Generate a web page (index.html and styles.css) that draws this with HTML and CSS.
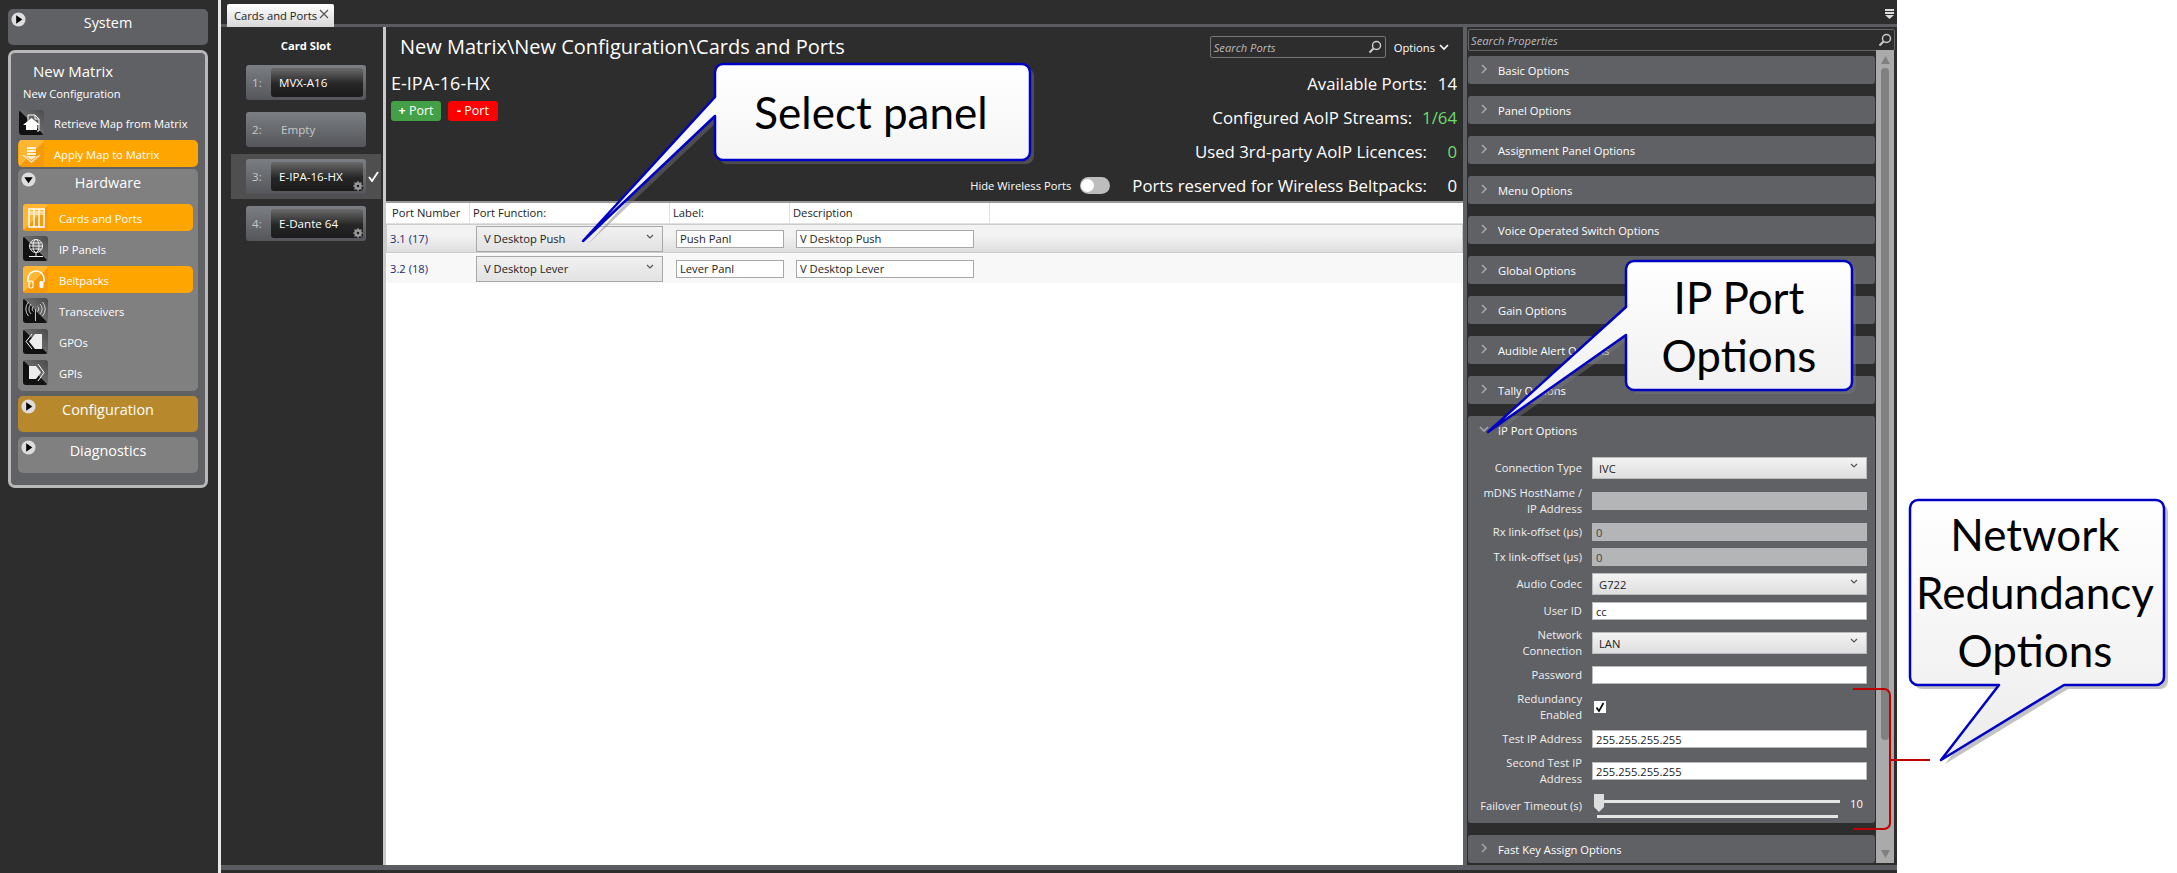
FILE: index.html
```html
<!DOCTYPE html>
<html lang="en">
<head>
<meta charset="utf-8">
<title>Cards and Ports</title>
<link rel="stylesheet" href="styles.css">
</head>
<body>
<div class="app">
  <aside class="sidebar">
    <section class="sys-panel">
      <svg class="disc" viewBox="0 0 16 16"><circle cx="8" cy="8" r="7.5" fill="#ddd"/><path d="M5.5 3.5 12 8l-6.500 4.500z" fill="#000"/></svg>
      <span class="group-title">System</span>
    </section>
    <section class="matrix">
      <div class="matrix-name">New Matrix</div>
      <div class="config-name">New Configuration</div>
      <div class="nav-row nav-top">
        <span class="tile"><svg viewBox="0 0 25 25"><path d="M9 11V5h7l4 4v12h-2M20 9h-4V5" fill="none" stroke="#fff"/><path d="M12.500 8 21 15h-3v5H7v-5H4z" fill="#fff"/></svg></span>
        <span>Retrieve Map from Matrix</span>
      </div>
      <div class="nav-row nav-apply on">
        <span class="tile"><svg viewBox="0 0 25 25"><path d="M8 6h9v2H8zM8 9h9v2H8zM8 12h9v2H8z" fill="#fff" opacity=".85"/><path d="M4 14l8.500 7 8.500-7" fill="none" stroke="#fff" opacity=".7" stroke-width="1.500"/><path d="M7 15h11l-5.500 4z" fill="#fff" opacity=".8"/></svg></span>
        <span>Apply Map to Matrix</span>
      </div>
      <div class="hardware">
        <div class="subhead">
          <svg class="disc" viewBox="0 0 16 16"><circle cx="8" cy="8" r="7.500" fill="#ddd"/><path d="M3.500 5.500h9L8 12z" fill="#000"/></svg>
          <span class="group-title">Hardware</span>
        </div>
        <div class="nav-row on">
          <span class="tile"><svg viewBox="0 0 25 25"><path d="M6 4h15v18H6zM11 4v18M16 4v18" fill="none" stroke="#fff" stroke-width="1.500"/><path d="M7 7h3M7 9h3M12 7h3M12 9h3M17 7h3M17 9h3" stroke="#fff"/></svg></span>
          <span>Cards and Ports</span>
        </div>
        <div class="nav-row">
          <span class="tile"><svg viewBox="0 0 25 25"><circle cx="13" cy="10" r="6.500" fill="none" stroke="#eee"/><ellipse cx="13" cy="10" rx="3" ry="6.500" fill="none" stroke="#eee"/><path d="M6.500 10h13M7.500 7h11M7.500 13h11M13 16.500V20M6 20.500h14" stroke="#eee" fill="none"/></svg></span>
          <span>IP Panels</span>
        </div>
        <div class="nav-row on">
          <span class="tile"><svg viewBox="0 0 25 25"><path d="M5 15v-3a8 8 0 0 1 16 0v3" fill="none" stroke="#fff" stroke-width="1.500"/><rect x="6" y="14" width="4" height="7" rx="1.500" fill="none" stroke="#fff" stroke-width="1.200"/><rect x="16.500" y="14" width="4" height="7" rx="1.500" fill="#fff"/></svg></span>
          <span>Beltpacks</span>
        </div>
        <div class="nav-row">
          <span class="tile"><svg viewBox="0 0 25 25"><path d="M12.500 11v12M10.500 8.500a3 3 0 0 0 0 5M14.500 8.500a3 3 0 0 1 0 5M8 6a7 7 0 0 0 0 10M17 6a7 7 0 0 1 0 10M5.500 4a10.500 10.500 0 0 0 0 14M19.500 4a10.500 10.500 0 0 1 0 14" fill="none" stroke="#ddd" stroke-width=".9"/></svg></span>
          <span>Transceivers</span>
        </div>
        <div class="nav-row">
          <span class="tile"><svg viewBox="0 0 25 25"><path d="M12 5h7v15h-7l-6-7.500z" fill="#eee"/><path d="M9 5 3 12.500 9 20" fill="none" stroke="#fff"/></svg></span>
          <span>GPOs</span>
        </div>
        <div class="nav-row">
          <span class="tile"><svg viewBox="0 0 25 25"><path d="M6 6h7l5 6.500-5 6.500H6z" fill="#eee"/><path d="M15 4l6 8.500-6 8.500" fill="none" stroke="#fff"/></svg></span>
          <span>GPIs</span>
        </div>
      </div>
      <div class="fold amber">
        <svg class="disc" viewBox="0 0 16 16"><circle cx="8" cy="8" r="7.500" fill="#ddd"/><path d="M5.500 3.500 12 8l-6.500 4.500z" fill="#000"/></svg>
        <span class="group-title">Configuration</span>
      </div>
      <div class="fold grey">
        <svg class="disc" viewBox="0 0 16 16"><circle cx="8" cy="8" r="7.500" fill="#ddd"/><path d="M5.500 3.500 12 8l-6.500 4.500z" fill="#000"/></svg>
        <span class="group-title">Diagnostics</span>
      </div>
    </section>
  </aside>

  <div class="workspace">
    <div class="tabbar">
      <div class="tab"><span>Cards and Ports</span><svg class="tab-x" viewBox="0 0 10 10"><path d="M1 1l8 8M9 1 1 9" stroke="#555" stroke-width="1.200"/></svg></div>
      <svg class="pin" viewBox="0 0 9 10"><path d="M0 0h9v2H0zM0 3h9v2H0z" fill="#ddd"/><path d="M0 6h9L4.500 10z" fill="#ddd"/></svg>
    </div>
    <div class="content">
      <div class="slots">
        <div class="slots-title">Card Slot</div>
        <div class="slot-wrap"><div class="slot"><span class="slot-num">1:</span><span class="slot-card">MVX-A16</span></div></div>
        <div class="slot-wrap"><div class="slot"><span class="slot-num">2:</span><span class="slot-empty">Empty</span></div></div>
        <div class="slot-wrap picked"><div class="slot"><span class="slot-num">3:</span><span class="slot-card">E-IPA-16-HX<svg class="gear" viewBox="0 0 10 10"><circle cx="5" cy="5" r="2.500" fill="none" stroke="#9a9a9a" stroke-width="2.400"/><path d="M5 0v2M5 8v2M0 5h2M8 5h2M1.500 1.500l1.500 1.500M7 7l1.500 1.500M1.500 8.500 3 7M7 3l1.500-1.500" stroke="#9a9a9a" stroke-width="1.200"/></svg></span></div><svg class="tick" viewBox="0 0 11 11"><path d="M1 6l3 4 6-9" fill="none" stroke="#fff" stroke-width="1.800"/></svg></div>
        <div class="slot-wrap"><div class="slot"><span class="slot-num">4:</span><span class="slot-card">E-Dante 64<svg class="gear" viewBox="0 0 10 10"><circle cx="5" cy="5" r="2.500" fill="none" stroke="#9a9a9a" stroke-width="2.400"/><path d="M5 0v2M5 8v2M0 5h2M8 5h2M1.500 1.500l1.500 1.500M7 7l1.500 1.500M1.500 8.500 3 7M7 3l1.500-1.500" stroke="#9a9a9a" stroke-width="1.200"/></svg></span></div></div>
      </div>

      <main class="main">
        <header class="main-head">
          <div class="head-top">
            <h1 class="crumb">New Matrix\New Configuration\Cards and Ports</h1>
            <div class="search-ports"><span>Search Ports</span><svg class="lens" viewBox="0 0 14 14"><circle cx="8.500" cy="5.500" r="4" fill="none" stroke="#ccc" stroke-width="1.500"/><path d="M5.500 8.500 1.500 12.500" stroke="#ccc" stroke-width="2"/></svg></div>
            <div class="options">Options<svg class="opt-chev" viewBox="0 0 10 7"><path d="M1 1l4 4 4-4" fill="none" stroke="#fff" stroke-width="1.600"/></svg></div>
          </div>
          <div class="head-body">
            <div class="card-info">
              <div class="card-name">E-IPA-16-HX</div>
              <div class="port-btns"><span class="port-btn add"><b>+</b> Port</span><span class="port-btn del"><b>-</b> Port</span></div>
            </div>
            <div class="stats">
              <div class="stat"><span>Available Ports:</span><span class="stat-val">14</span></div>
              <div class="stat"><span>Configured AoIP Streams:</span><span class="stat-val wide ok">1/64</span></div>
              <div class="stat"><span>Used 3rd-party AoIP Licences:</span><span class="stat-val ok">0</span></div>
              <div class="stat">
                <span class="hide-wl">Hide Wireless Ports</span>
                <span class="toggle"><i></i></span>
                <span>Ports reserved for Wireless Beltpacks:</span><span class="stat-val">0</span>
              </div>
            </div>
          </div>
        </header>
        <div class="ports">
          <div class="ports-head"><span>Port Number</span><span>Port Function:</span><span>Label:</span><span>Description</span></div>
          <div class="port-row sel">
            <span class="port-no">3.1 (17)</span>
            <div class="drop"><span>V Desktop Push</span><svg class="chev" viewBox="0 0 8 6"><path d="M1 1l3 3 3-3" fill="none" stroke="#555" stroke-width="1.200"/></svg></div>
            <div class="cell-in label-in">Push Panl</div>
            <div class="cell-in desc-in">V Desktop Push</div>
          </div>
          <div class="port-row">
            <span class="port-no">3.2 (18)</span>
            <div class="drop"><span>V Desktop Lever</span><svg class="chev" viewBox="0 0 8 6"><path d="M1 1l3 3 3-3" fill="none" stroke="#555" stroke-width="1.200"/></svg></div>
            <div class="cell-in label-in">Lever Panl</div>
            <div class="cell-in desc-in">V Desktop Lever</div>
          </div>
        </div>
      </main>

      <aside class="props">
        <div class="search-props"><span>Search Properties</span><svg class="lens" viewBox="0 0 14 14"><circle cx="8.500" cy="5.500" r="4" fill="none" stroke="#ccc" stroke-width="1.500"/><path d="M5.500 8.500 1.500 12.500" stroke="#ccc" stroke-width="2"/></svg></div>
        <div class="props-body">
          <div class="sections">
            <div class="sec"><svg class="sec-chev" viewBox="0 0 6 10"><path d="M1 1l4 4-4 4" fill="none" stroke="#aaa" stroke-width="1.500"/></svg>Basic Options</div>
            <div class="sec"><svg class="sec-chev" viewBox="0 0 6 10"><path d="M1 1l4 4-4 4" fill="none" stroke="#aaa" stroke-width="1.500"/></svg>Panel Options</div>
            <div class="sec"><svg class="sec-chev" viewBox="0 0 6 10"><path d="M1 1l4 4-4 4" fill="none" stroke="#aaa" stroke-width="1.500"/></svg>Assignment Panel Options</div>
            <div class="sec"><svg class="sec-chev" viewBox="0 0 6 10"><path d="M1 1l4 4-4 4" fill="none" stroke="#aaa" stroke-width="1.500"/></svg>Menu Options</div>
            <div class="sec"><svg class="sec-chev" viewBox="0 0 6 10"><path d="M1 1l4 4-4 4" fill="none" stroke="#aaa" stroke-width="1.500"/></svg>Voice Operated Switch Options</div>
            <div class="sec"><svg class="sec-chev" viewBox="0 0 6 10"><path d="M1 1l4 4-4 4" fill="none" stroke="#aaa" stroke-width="1.500"/></svg>Global Options</div>
            <div class="sec"><svg class="sec-chev" viewBox="0 0 6 10"><path d="M1 1l4 4-4 4" fill="none" stroke="#aaa" stroke-width="1.500"/></svg>Gain Options</div>
            <div class="sec"><svg class="sec-chev" viewBox="0 0 6 10"><path d="M1 1l4 4-4 4" fill="none" stroke="#aaa" stroke-width="1.500"/></svg>Audible Alert Options</div>
            <div class="sec"><svg class="sec-chev" viewBox="0 0 6 10"><path d="M1 1l4 4-4 4" fill="none" stroke="#aaa" stroke-width="1.500"/></svg>Tally Options</div>
            <div class="sec-open">
              <div class="sec"><svg class="sec-chev down" viewBox="0 0 6 10"><path d="M1 1l4 4-4 4" fill="none" stroke="#aaa" stroke-width="1.500"/></svg>IP Port Options</div>
              <div class="form">
                <label>Connection Type</label><div class="fld drop-fld"><span>IVC</span><svg class="chev" viewBox="0 0 8 6"><path d="M1 1l3 3 3-3" fill="none" stroke="#555" stroke-width="1.200"/></svg></div>
                <label>mDNS HostName /<br>IP Address</label><div class="fld off"></div>
                <label>Rx link-offset (µs)</label><div class="fld off">0</div>
                <label>Tx link-offset (µs)</label><div class="fld off">0</div>
                <label>Audio Codec</label><div class="fld drop-fld"><span>G722</span><svg class="chev" viewBox="0 0 8 6"><path d="M1 1l3 3 3-3" fill="none" stroke="#555" stroke-width="1.200"/></svg></div>
                <label>User ID</label><div class="fld">cc</div>
                <label>Network<br>Connection</label><div class="fld drop-fld"><span>LAN</span><svg class="chev" viewBox="0 0 8 6"><path d="M1 1l3 3 3-3" fill="none" stroke="#555" stroke-width="1.200"/></svg></div>
                <label>Password</label><div class="fld"></div>
                <label>Redundancy<br>Enabled</label><div class="check-cell"><svg class="check" viewBox="0 0 12 12"><rect width="12" height="12" fill="#fff"/><path d="M2.500 6.500 5 10l4.500-8" fill="none" stroke="#000" stroke-width="1.600"/></svg></div>
                <label>Test IP Address</label><div class="fld">255.255.255.255</div>
                <label>Second Test IP<br>Address</label><div class="fld">255.255.255.255</div>
                <label class="fail-label">Failover Timeout (s)</label>
                <div class="slider">
                  <div class="slider-top"><svg class="thumb" viewBox="0 0 10 18"><path d="M0 0h10v13l-5 5-5-5z" fill="#ddd"/></svg><span class="track"></span><span class="slider-val">10</span></div>
                  <span class="track2"></span>
                </div>
              </div>
            </div>
            <div class="sec"><svg class="sec-chev" viewBox="0 0 6 10"><path d="M1 1l4 4-4 4" fill="none" stroke="#aaa" stroke-width="1.500"/></svg>Fast Key Assign Options</div>
          </div>
          <div class="scroll">
            <svg class="arrow" viewBox="0 0 9 8"><path d="M4.500 0 9 8H0z" fill="#808080"/></svg>
            <span class="scroll-thumb"></span>
            <svg class="arrow" viewBox="0 0 9 8"><path d="M0 0h9L4.500 8z" fill="#808080"/></svg>
          </div>
        </div>
      </aside>
    </div>
    <div class="footbar"></div>
  </div>
</div>

<svg class="notes" viewBox="0 0 2177 873" width="2177" height="873">
  <defs>
    <linearGradient id="bub" x1="0" y1="0" x2="0" y2="1"><stop offset="0" stop-color="#fff"/><stop offset="1" stop-color="#ececec"/></linearGradient>
  </defs>
  <path class="bub-shadow" d="M723 64H1022a8 8 0 0 1 8 8V152a8 8 0 0 1-8 8H723a8 8 0 0 1-8-8V116L583 241 715 97V72a8 8 0 0 1 8-8z" transform="translate(4 4)"/>
  <path class="bub" d="M723 64H1022a8 8 0 0 1 8 8V152a8 8 0 0 1-8 8H723a8 8 0 0 1-8-8V116L583 241 715 97V72a8 8 0 0 1 8-8z"/>
  <text class="bub-text" x="871" y="129">Select panel</text>

  <path class="bub-shadow" d="M1634 261H1844a8 8 0 0 1 8 8V382a8 8 0 0 1-8 8H1634a8 8 0 0 1-8-8V335L1488 432 1626 307V269a8 8 0 0 1 8-8z" transform="translate(4 4)"/>
  <path class="bub" d="M1634 261H1844a8 8 0 0 1 8 8V382a8 8 0 0 1-8 8H1634a8 8 0 0 1-8-8V335L1488 432 1626 307V269a8 8 0 0 1 8-8z"/>
  <text class="bub-text" x="1739" y="314">IP Port</text>
  <text class="bub-text" x="1739" y="372">Options</text>

  <path class="bub-shadow" d="M1918 500H2156a8 8 0 0 1 8 8V677a8 8 0 0 1-8 8H2064L1941 760 1999 685H1918a8 8 0 0 1-8-8V508a8 8 0 0 1 8-8z" transform="translate(4 4)"/>
  <path class="bub" d="M1918 500H2156a8 8 0 0 1 8 8V677a8 8 0 0 1-8 8H2064L1941 760 1999 685H1918a8 8 0 0 1-8-8V508a8 8 0 0 1 8-8z"/>
  <text class="bub-text" x="2035" y="551">Network</text>
  <text class="bub-text" x="2035" y="609">Redundancy</text>
  <text class="bub-text" x="2035" y="667">Options</text>

  <path class="bracket" d="M1853 689H1884a6 6 0 0 1 6 6V823a6 6 0 0 1-6 6H1853M1890 760H1930"/>
</svg>
</body>
</html>
```

FILE: styles.css
```css
* { box-sizing: border-box; }
html, body { margin: 0; padding: 0; background: #fff; }
body { width: 2177px; height: 873px; overflow: hidden; position: relative; font-family: "Open Sans", "Liberation Sans", sans-serif; font-size: 11.2px; color: #fff; }
svg { display: block; flex: none; }

.app { display: flex; width: 1897px; height: 873px; background: #2d2d2d; }

/* sidebar */
.sidebar { width: 221px; flex: none; padding: 9px 10px 0 8px; border-right: 3px solid #e8e8e8; }
.sys-panel { position: relative; height: 36px; background: #5f6165; border-radius: 5px; text-align: center; padding-top: 4px; }
.group-title { font-size: 14.400px; line-height: 20px; }
.disc { position: absolute; width: 15px; height: 15px; left: 3px; top: 3px; }
.matrix { margin-top: 5px; height: 438px; background: #5f6165; border: 3px solid #b8b8b8; border-radius: 7px; padding: 10px 7px 0; }
.matrix-name { font-size: 15px; line-height: 20px; padding-left: 15px; margin-top: -2px; }
.config-name { font-size: 11.200px; line-height: 16px; margin-top: 5px; margin-left: 5px; }
.nav-row { display: flex; align-items: center; gap: 10px; height: 27px; font-size: 11.200px; border-radius: 5px; padding-left: 1px; }
.nav-row > span:last-child { margin-top: 2px; }
.nav-row.nav-top { height: 25px; margin-top: 8px; }
.nav-row.nav-apply { margin-top: 5px; }
.nav-row.on { background: #ffa500; }
.tile { width: 25px; height: 25px; flex: none; border-radius: 3px; background: linear-gradient(45deg, #111 0 48%, #6a6a6a 52%, #4a4a4a); }
.on .tile { background: linear-gradient(135deg, #ffb733 0 50%, #f59a0c 50%); height: 27px; }
.on .tile svg { margin-top: 1px; }
.hardware { position: relative; height: 222px; background: #808080; border-radius: 5px; margin-top: 2px; padding: 0 5px; }
.subhead { height: 35px; text-align: center; padding-top: 4px; }
.hardware .nav-row { padding-left: 0; gap: 11px; }
.hardware .nav-row + .nav-row { margin-top: 5px; }
.hardware .nav-row:nth-last-child(-n+2) { margin-top: 6px; }
.hardware .nav-row:not(.on) { height: 25px; }
.fold { position: relative; height: 36px; border-radius: 5px; margin-top: 5px; text-align: center; padding-top: 4px; }
.amber { background: #b8892c; }
.grey { background: #808080; }

/* workspace */
.workspace { flex: 1; min-width: 0; display: flex; flex-direction: column; }
.tabbar { display: flex; align-items: flex-end; height: 27px; padding: 0 3px 0 6px; border-bottom: 3px solid #5a5c5f; }
.tab { display: flex; align-items: center; gap: 2px; height: 23px; width: 107px; margin-bottom: -3px; background: linear-gradient(#fff, #d8d8d8); color: #222; padding-left: 7px; border-radius: 2px 2px 0 0; }
.tab-x { width: 10px; height: 10px; margin-top: -4px; }
.pin { width: 9px; height: 10px; margin-left: auto; margin-bottom: 5px; }
.content { flex: none; height: 838px; display: flex; }
.footbar { height: 5px; background: #5a5c5f; }

/* slots */
.slots { width: 165px; flex: none; padding-top: 9px; border-right: 3px solid #c9c9c9; padding-left: 10px; }
.slots-title { font-weight: 700; text-align: center; width: 150px; line-height: 20px; margin-bottom: 4px; font-size: 11.200px; }
.slot-wrap { position: relative; width: 150px; height: 45px; padding: 5px 15px; margin-bottom: 2px; }
.picked { background: #4f4f4f; }
.slot { display: flex; width: 120px; height: 35px; padding: 3px 3px 3px 6px; border-radius: 3px; background: linear-gradient(#7b7e82, #54565a); font-size: 11.600px; }
.slot-num { width: 19px; flex: none; line-height: 29px; color: #c8c8c8; }
.slot-card { position: relative; flex: 1; line-height: 29px; padding-left: 8px; border-radius: 3px; background: linear-gradient(#6a6a6a, #262626 55%, #1b1b1b); }
.slot-empty { padding-left: 10px; line-height: 29px; color: #c8c8c8; }
.gear { position: absolute; right: 0; bottom: 0; width: 10px; height: 10px; }
.tick { position: absolute; right: 2px; top: 17px; width: 11px; height: 11px; }

/* main */
.main { width: 1081px; flex: none; display: flex; flex-direction: column; background: #fff; border-right: 4px solid #5e6064; }
.main-head { height: 174px; flex: none; background: #2d2d2d; padding: 0 6px 0 5px; }
.head-top { display: flex; align-items: center; height: 39px; padding-left: 9px; }
.crumb { margin: 0; flex: 1; font-size: 20px; font-weight: 400; line-height: 42px; }
.search-ports { display: flex; align-items: center; justify-content: space-between; width: 176px; height: 22px; margin-top: 1px; padding: 0 3px; border: 1px solid #777; border-radius: 2px; font-style: italic; color: #bbb; }
.lens { width: 14px; height: 14px; }
.options { display: flex; align-items: center; gap: 4px; margin: 1px 8px 0 8px; }
.opt-chev { width: 10px; height: 7px; }
.head-body { display: flex; justify-content: space-between; }
.card-name { font-size: 18px; line-height: 24px; margin-top: 5px; }
.port-btns { display: flex; gap: 7px; margin-top: 6px; }
.port-btn { width: 50px; height: 20px; border-radius: 3px; text-align: center; line-height: 20px; font-size: 12.500px; }
.add { background: #43a047; }
.del { background: #ff0000; }
.stats { width: 700px; }
.stat { display: flex; justify-content: flex-end; align-items: center; height: 34px; font-size: 16.800px; }
.stat-val { width: 30px; text-align: right; }
.stat-val.wide { width: auto; margin-left: 10px; }
.ok { color: #6fdc6f; }
.hide-wl { font-size: 11.200px; margin-right: 9px; }
.toggle { position: relative; width: 30px; height: 17px; border-radius: 9px; background: #bdbdbd; margin-right: 22px; }
.toggle i { position: absolute; left: 1px; top: 2px; width: 13px; height: 13px; border-radius: 50%; background: #fff; }

.ports { flex: 1; border-top: 2px solid #9a9a9a; color: #222; }
.ports-head { display: grid; grid-template-columns: 83px 200px 120px 200px; height: 21px; line-height: 20px; padding-left: 1px; border-bottom: 1px solid #e0e0e0; }
.ports-head span { padding-left: 3px; border-right: 1px solid #e2e2e2; }
.ports-head span:first-child { padding-left: 5px; }
.port-row { display: flex; align-items: center; height: 29px; margin: 1px 0 0; padding-left: 4px; background: #f8f8f8; }
.port-row.sel { height: 29px; margin-top: 0; background: linear-gradient(#f2f2f2 40%, #dedede); border: 1px solid #ccc; padding-left: 3px; }
.port-no { width: 86px; color: #1c2a70; flex: none; }
.drop { display: flex; align-items: center; justify-content: space-between; width: 187px; height: 26px; padding: 0 8px 0 7px; background: linear-gradient(#f1f1f1, #e2e2e2); border: 1px solid #a8a8a8; flex: none; }
.chev { width: 8px; height: 6px; margin-bottom: 4px; }
.cell-in { height: 18px; line-height: 16px; padding-left: 3px; background: #fff; border: 1px solid #a8a8a8; flex: none; }
.label-in { width: 108px; margin-left: 13px; }
.desc-in { width: 178px; margin-left: 12px; }

/* properties */
.props { flex: 1; min-width: 0; padding-left: 1px; }
.search-props { display: flex; align-items: center; justify-content: space-between; height: 22px; width: 427px; margin-top: 2px; padding: 0 2px; border: 1px solid #666; border-radius: 2px; font-style: italic; color: #bbb; }
.props-body { display: flex; height: 813px; margin-top: -1px; }
.sections { width: 407px; padding-top: 6px; display: flex; flex-direction: column; gap: 12px; }
.sec { display: flex; align-items: center; gap: 11px; height: 28px; padding-left: 13px; background: #5f6165; border-radius: 3px; flex: none; }
.sec-chev { width: 6px; height: 10px; margin-top: -3px; }
.sec-chev.down { transform: rotate(90deg); }
.sec-open { height: 407px; flex: none; background: #5f6165; border-radius: 3px; overflow: hidden; }
.form { display: grid; grid-template-columns: 108px 275px; grid-template-rows: 22px 30px 18px 18px 22px 18px 32px 18px 32px 18px 32px 26px; column-gap: 10px; row-gap: 7px; margin: 13px 0 0 6px; }
.form label { display: flex; align-items: center; justify-content: flex-end; text-align: right; line-height: 16px; color: #f0f0f0; }
.fld { display: flex; align-items: center; color: #222; background: #fff; border: 1px solid #bbb; padding-left: 3px; align-self: center; height: 18px; }
.drop-fld { justify-content: space-between; height: 22px; padding: 0 8px 0 6px; background: linear-gradient(#f3f3f3, #dedede); }
.fld.off { background: #b3b5b7; border-color: #b3b5b7; color: #444; }
.check-cell { display: flex; align-items: center; padding-left: 2px; }
.check { width: 12px; height: 12px; }
.fail-label { align-items: flex-start !important; padding-top: 4px; }
.slider { display: flex; flex-direction: column; }
.slider-top { display: flex; align-items: flex-start; height: 21px; padding-left: 2px; }
.thumb { width: 10px; height: 18px; }
.track { width: 236px; height: 3px; margin-top: 6px; background: #e4e4e4; }
.slider-val { margin: 2px 0 0 10px; line-height: 16px; }
.track2 { display: block; width: 241px; height: 3px; margin-left: 5px; background: #e4e4e4; }
.scroll { display: flex; flex-direction: column; align-items: center; width: 18px; margin-left: 1px; background: #aaa; padding: 6px 0 5px; height: 813px; }
.arrow { width: 9px; height: 8px; }
.scroll-thumb { width: 8px; height: 672px; margin: 4px 0 auto; background: #808080; border-radius: 4px; }

/* annotations */
.notes { position: absolute; left: 0; top: 0; pointer-events: none; }
.bub { fill: url(#bub); stroke: #0000c4; stroke-width: 2.500; stroke-linejoin: round; }
.bub-shadow { fill: rgba(120, 120, 120, .45); }
.bub-text { font-family: Lato, "Open Sans", sans-serif; font-size: 44px; fill: #000; text-anchor: middle; }
.bracket { fill: none; stroke: #c00000; stroke-width: 2; }
```
